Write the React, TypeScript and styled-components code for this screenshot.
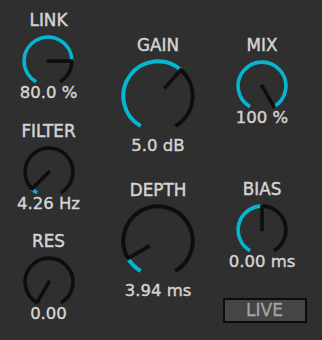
import React from "react";
import styled, { createGlobalStyle } from "styled-components";

const GlobalStyle = createGlobalStyle`
  html, body {
    margin: 0;
    padding: 0;
    background: #2f2f2f;
  }
  body {
    font-family: "DejaVu Sans", "Liberation Sans", sans-serif;
  }
`;

const CYAN = "#05b6d2";
const DARK = "#0e0e0e";

const Panel = styled.div`
  width: 322px;
  height: 340px;
  display: grid;
  grid-template-columns: 97px 122px 86px;
  background: #2f2f2f;
  overflow: hidden;
`;

const Column = styled.div`
  display: flex;
  flex-direction: column;
  align-items: center;
`;

const ParamBox = styled.div<{ $mt: number }>`
  display: flex;
  flex-direction: column;
  align-items: center;
  margin-top: ${(p) => p.$mt}px;
`;

const Label = styled.div`
  font-size: 16.8px;
  line-height: 18px;
  color: #d4d4d4;
  white-space: nowrap;
  -webkit-text-stroke: 0.45px #d4d4d4;
`;

const KnobSvg = styled.svg`
  display: block;
  margin-top: 5.5px;
`;

const Value = styled.div<{ $gap: number }>`
  margin-top: ${(p) => p.$gap}px;
  font-size: 16.5px;
  line-height: 18px;
  color: #d4d4d4;
  white-space: nowrap;
  -webkit-text-stroke: 0.4px #d4d4d4;
`;

const LiveButton = styled.div<{ $mt: number }>`
  margin-top: ${(p) => p.$mt}px;
  margin-left: 5px;
  width: 84px;
  height: 25px;
  box-sizing: border-box;
  border: 2px solid #0d0d0d;
  background: #454545;
  color: #a3a3a3;
  font-size: 17px;
  line-height: 21px;
  text-align: center;
  -webkit-text-stroke: 0.35px #a3a3a3;
`;

const START = -150;
const SPAN = 300;

function pt(c: number, r: number, a: number): [number, number] {
  const rad = (a * Math.PI) / 180;
  return [c + r * Math.sin(rad), c - r * Math.cos(rad)];
}

function arc(c: number, r: number, a1: number, a2: number): string {
  if (a2 - a1 < 0.01) return "";
  const [x1, y1] = pt(c, r, a1);
  const [x2, y2] = pt(c, r, a2);
  const large = a2 - a1 > 180 ? 1 : 0;
  return `M ${x1} ${y1} A ${r} ${r} 0 ${large} 1 ${x2} ${y2}`;
}

type KnobProps = { size: number; value: number };

function Knob({ size, value }: KnobProps) {
  const big = size > 60;
  const sw = big ? 4 : 3.6;
  const c = size / 2;
  const rOuter = size / 2 - 0.3;
  const r = rOuter - sw / 2;
  const aVal = START + SPAN * value;
  const aEnd = START + SPAN;
  const pLen = 27;
  const [px1, py1] = pt(c, rOuter - pLen, aVal);
  const [px2, py2] = pt(c, rOuter - 0.5, aVal);
  const fill = arc(c, r, START, aVal);
  const rest = arc(c, r, aVal, aEnd);
  return (
    <KnobSvg width={size} height={size} viewBox={`0 0 ${size} ${size}`}>
      {rest && <path d={rest} fill="none" stroke={DARK} strokeWidth={sw} />}
      {fill && <path d={fill} fill="none" stroke={CYAN} strokeWidth={sw} />}
      <line x1={px1} y1={py1} x2={px2} y2={py2} stroke={DARK} strokeWidth={3.6} />
    </KnobSvg>
  );
}

type ParamProps = {
  label: string;
  value: number;
  text: string;
  size: number;
  mt: number;
};

function Param({ label, value, text, size, mt }: ParamProps) {
  return (
    <ParamBox $mt={mt}>
      <Label>{label}</Label>
      <Knob size={size} value={value} />
      <Value $gap={size > 60 ? 3.5 : -2.5}>{text}</Value>
    </ParamBox>
  );
}

export default function App() {
  return (
    <>
      <GlobalStyle />
      <Panel>
        <Column>
          <Param label="LINK" value={0.8} text="80.0 %" size={52} mt={11} />
          <Param label="FILTER" value={0.05} text="4.26 Hz" size={52} mt={20} />
          <Param label="RES" value={0} text="0.00" size={52} mt={19} />
        </Column>
        <Column>
          <Param label="GAIN" value={0.637} text="5.0 dB" size={74} mt={35.5} />
          <Param label="DEPTH" value={0.1} text="3.94 ms" size={74} mt={26} />
        </Column>
        <Column>
          <Param label="MIX" value={1} text="100 %" size={52} mt={36} />
          <Param label="BIAS" value={0.5} text="0.00 ms" size={52} mt={53} />
          <LiveButton $mt={27}>LIVE</LiveButton>
        </Column>
      </Panel>
    </>
  );
}
